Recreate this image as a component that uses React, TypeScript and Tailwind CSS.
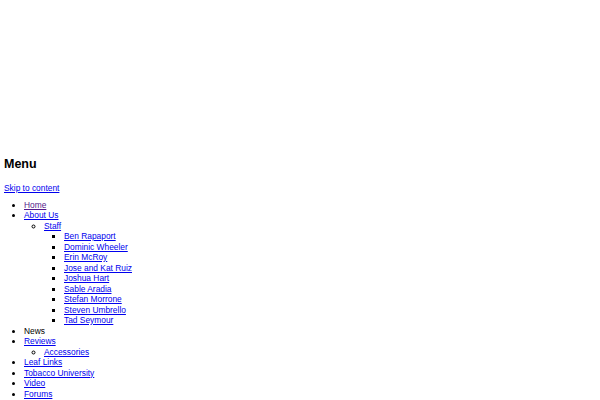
const staff = [
  'Ben Rapaport',
  'Dominic Wheeler',
  'Erin McRoy',
  'Jose and Kat Ruiz',
  'Joshua Hart',
  'Sable Aradia',
  'Stefan Morrone',
  'Steven Umbrello',
  'Tad Seymour',
]

const link = 'text-[#0000ee] underline'

export default function App() {
  return (
    <div className="h-[400px] overflow-hidden bg-white px-1 pt-[156px] font-['Liberation_Sans',Arial,sans-serif] text-[8.4px] leading-[10.5px] text-black">
      <h2 className="text-[12.5px] font-bold leading-[16px]">Menu</h2>
      <a href="#" className={`${link} mt-[11px] block`}>
        Skip to content
      </a>
      <ul className="mt-[6px] list-disc pl-5">
        <li>
          <a href="#" className="text-[#551a8b] underline">
            Home
          </a>
        </li>
        <li>
          <a href="#" className={link}>About Us</a>
          <ul className="list-[circle] pl-5">
            <li>
              <a href="#" className={link}>Staff</a>
              <ul className="list-[square] pl-5">
                {staff.map((name) => (
                  <li key={name}>
                    <a href="#" className={link}>{name}</a>
                  </li>
                ))}
              </ul>
            </li>
          </ul>
        </li>
        <li>News</li>
        <li>
          <a href="#" className={link}>Reviews</a>
          <ul className="list-[circle] pl-5">
            <li>
              <a href="#" className={link}>Accessories</a>
            </li>
          </ul>
        </li>
        <li>
          <a href="#" className={link}>Leaf Links</a>
        </li>
        <li>
          <a href="#" className={link}>Tobacco University</a>
        </li>
        <li>
          <a href="#" className={link}>Video</a>
        </li>
        <li>
          <a href="#" className={link}>Forums</a>
        </li>
      </ul>
    </div>
  )
}
